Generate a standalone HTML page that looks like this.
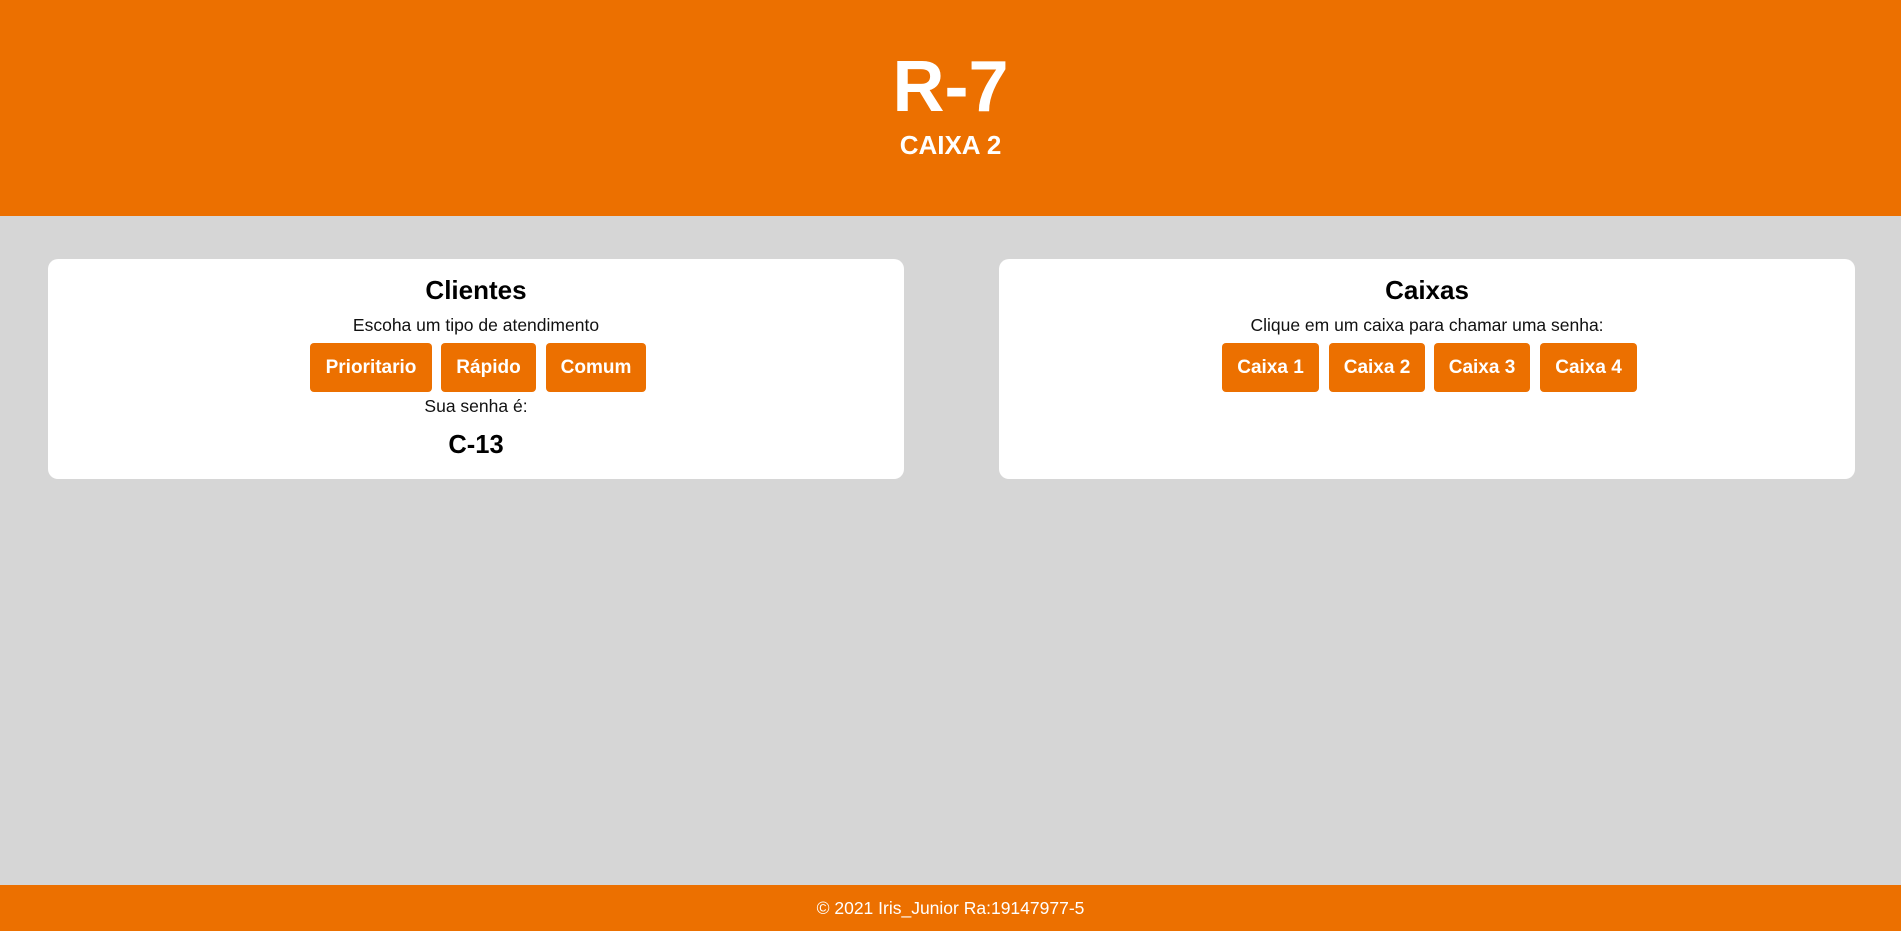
<!DOCTYPE html>
<html><head><meta charset="utf-8"><style>
*{margin:0;padding:0;box-sizing:border-box}
body{width:1901px;height:931px;background:#d6d6d6;font-family:"Liberation Sans",Arial,sans-serif;position:relative;overflow:hidden}
.hdr{position:absolute;left:0;top:0;width:1901px;height:216px;background:#ec7000;color:#fff;text-align:center}
.t1{position:absolute;left:0;width:100%;top:47px;font-size:72px;font-weight:bold;line-height:80px}
.t2{position:absolute;left:0;width:100%;top:129px;font-size:26px;font-weight:bold;line-height:32px}
.card{position:absolute;top:259px;height:220px;width:856px;background:#fff;border-radius:10px;text-align:center}
.abs{position:absolute;left:0;width:100%}
h2{font-size:26px;font-weight:bold;line-height:30px}
p{font-size:17.5px;line-height:20px;color:#111}
.btn{position:absolute;top:84px;height:49px;background:#ec7000;color:#fff;border-radius:4px;font-weight:bold;font-size:19px;line-height:49px;text-align:center}
.ft{position:absolute;left:0;top:885px;width:1901px;height:46px;background:#ec7000;color:#fff;text-align:center;font-size:17.5px;line-height:46px}
</style></head><body>
<div class="hdr"><div class="t1">R-7</div><div class="t2">CAIXA 2</div></div>
<div class="card" style="left:48px">
 <h2 class="abs" style="top:16px">Clientes</h2>
 <p class="abs" style="top:56px">Escoha um tipo de atendimento</p>
 <div class="btn" style="left:262px;width:122px">Prioritario</div>
 <div class="btn" style="left:393px;width:95px">Rápido</div>
 <div class="btn" style="left:498px;width:100px">Comum</div>
 <p class="abs" style="top:137px">Sua senha é:</p>
 <h2 class="abs" style="top:171px;font-size:25.5px">C-13</h2>
</div>
<div class="card" style="left:999px">
 <h2 class="abs" style="top:16px">Caixas</h2>
 <p class="abs" style="top:56px">Clique em um caixa para chamar uma senha:</p>
 <div class="btn" style="left:223px;width:97px">Caixa 1</div>
 <div class="btn" style="left:330px;width:96px">Caixa 2</div>
 <div class="btn" style="left:435px;width:96px">Caixa 3</div>
 <div class="btn" style="left:541px;width:97px">Caixa 4</div>
</div>
<div class="ft">© 2021 Iris_Junior Ra:19147977-5</div>
</body></html>
